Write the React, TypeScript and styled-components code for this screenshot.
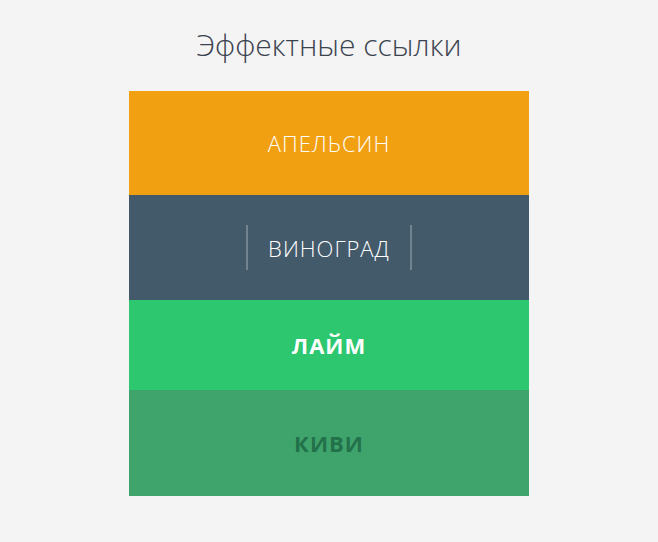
import React from "react";
import styled, { createGlobalStyle } from "styled-components";

const Global = createGlobalStyle`
  html, body { margin: 0; padding: 0; background: #f4f4f4; }
  body { font-family: "Open Sans", "Liberation Sans", sans-serif; }
`;

const Page = styled.div`
  display: flex;
  flex-direction: column;
  align-items: center;
  padding-top: 27px;
`;

const Title = styled.h1`
  margin: 0 0 28px;
  font-size: 30px;
  line-height: 36px;
  font-weight: 300;
  color: #3c4350;
`;

const Nav = styled.nav`
  width: 400px;
  display: flex;
  flex-direction: column;
`;

const Item = styled.div<{ $bg: string; $h: number }>`
  background: ${(p) => p.$bg};
  height: ${(p) => p.$h}px;
  display: flex;
  align-items: center;
  justify-content: center;
`;

const Link = styled.a<{ $weight: number; $color: string; $bars?: boolean }>`
  position: relative;
  font-size: 22px;
  font-weight: ${(p) => p.$weight};
  color: ${(p) => p.$color};
  text-transform: uppercase;
  letter-spacing: 1px;
  text-decoration: none;
  line-height: 1;
  padding: 0 ${(p) => (p.$bars ? 22 : 0)}px;
  ${(p) =>
    p.$bars &&
    `
    &::before, &::after {
      content: "";
      position: absolute;
      top: 50%;
      width: 2px;
      height: 45px;
      margin-top: -23px;
      background: rgba(255,255,255,0.25);
    }
    &::before { left: 0; }
    &::after { right: 0; }
  `}
`;

export default function App() {
  return (
    <>
      <Global />
      <Page>
        <Title>Эффектные ссылки</Title>
        <Nav>
          <Item $bg="#f1a012" $h={104}>
            <Link $weight={300} $color="#ffffff">Апельсин</Link>
          </Item>
          <Item $bg="#435a6b" $h={105}>
            <Link $weight={300} $color="#ffffff" $bars>Виноград</Link>
          </Item>
          <Item $bg="#2cc76f" $h={90}>
            <Link $weight={700} $color="#ffffff">Лайм</Link>
          </Item>
          <Item $bg="#3fa46b" $h={106}>
            <Link $weight={700} $color="#23714a">Киви</Link>
          </Item>
        </Nav>
      </Page>
    </>
  );
}
